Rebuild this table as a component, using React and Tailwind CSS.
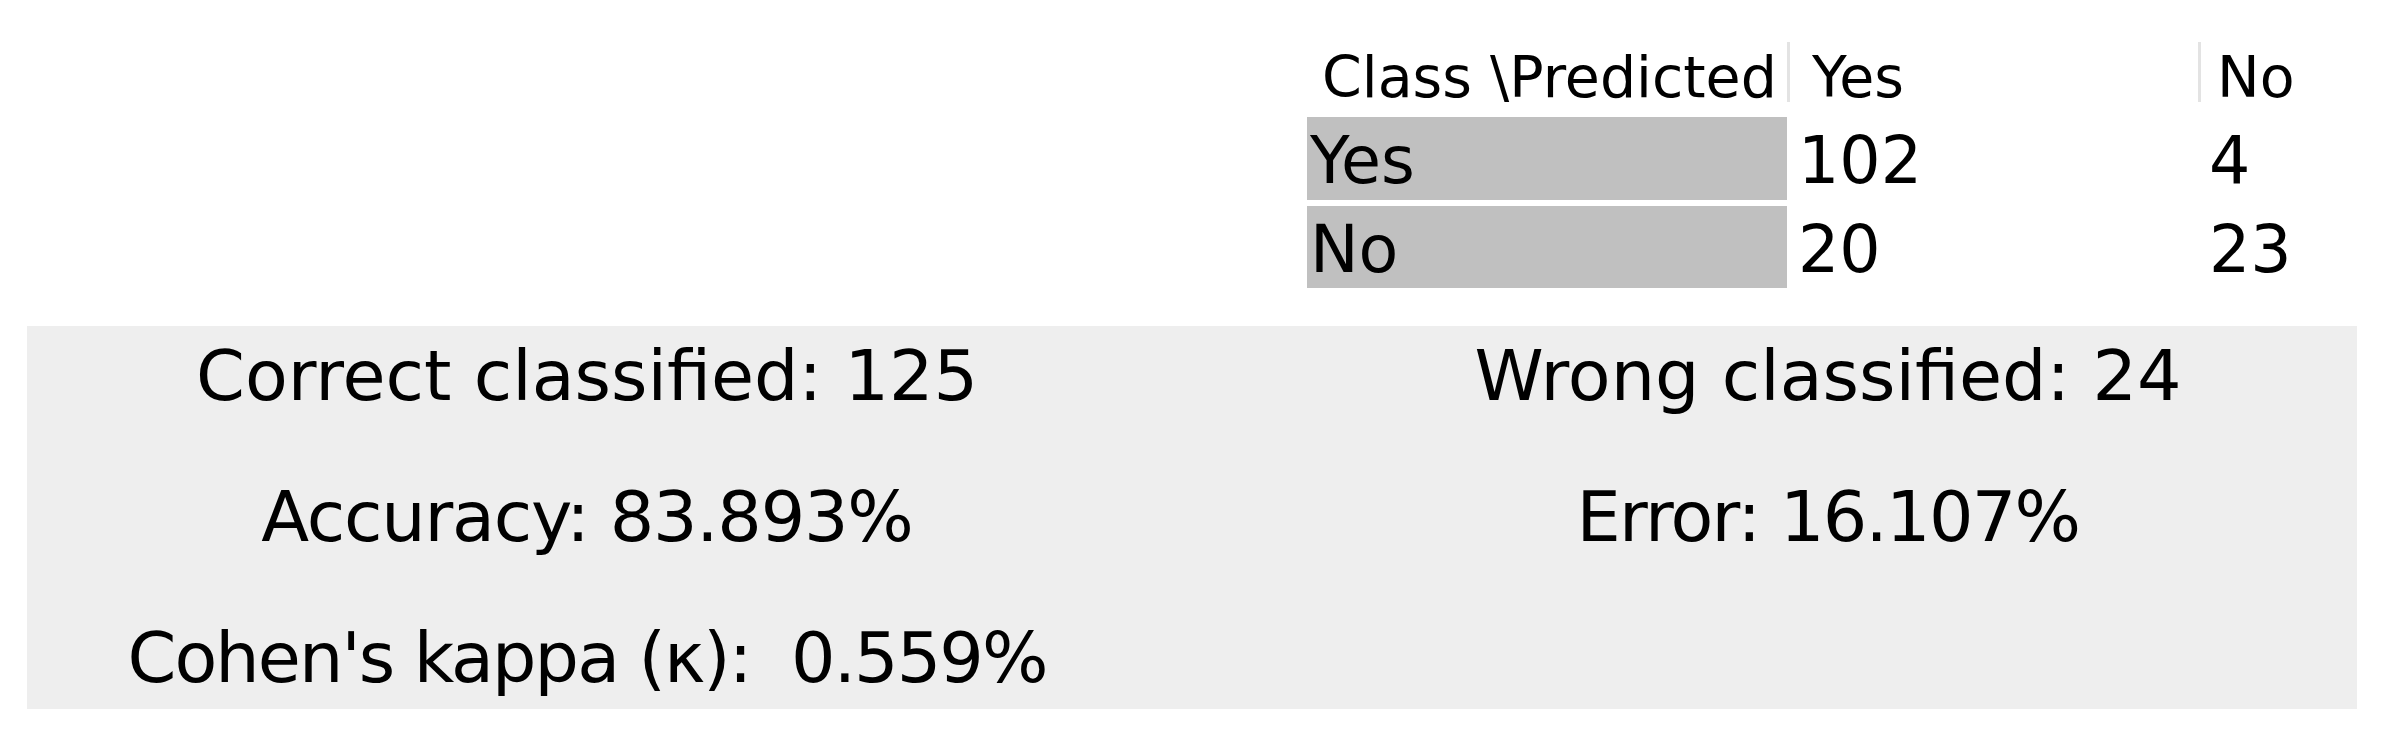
const font = { fontFamily: '"DejaVu Sans", "Liberation Sans", sans-serif' };

const rows = [
  { label: "Yes", yes: 102, no: 4, height: "h-[83px]" },
  { label: "No", yes: 20, no: 23, height: "h-[82px]" },
];

function ConfusionTable() {
  return (
    <div className="ml-[1307px] w-[1074px] text-black">
      <div className="flex h-[60px] text-[57px] leading-[70px]">
        <div className="w-[480px] whitespace-nowrap pl-[15px]">Class \Predicted</div>
        <div className="w-[3px] bg-[#e3e3e3]" />
        <div className="w-[408px] pl-[22px]">Yes</div>
        <div className="w-[3px] bg-[#e3e3e3]" />
        <div className="flex-1 pl-[16px]">No</div>
      </div>
      <div className="mt-[15px] flex flex-col gap-[6px] text-[65px] leading-[87px]">
        {rows.map((r) => (
          <div key={r.label} className={`flex ${r.height}`}>
            <div className="w-[480px] bg-[#c0c0c0] pl-[3px]">{r.label}</div>
            <div className="w-[411px] pl-[11px]">{r.yes}</div>
            <div className="flex-1 pl-[11px]">{r.no}</div>
          </div>
        ))}
      </div>
    </div>
  );
}

function Stats() {
  return (
    <div className="ml-[27px] mt-[38px] w-[2330px] bg-[#eeeeee] pt-[9px] pb-[10px] text-black">
      <div className="grid grid-cols-[1120px_1fr] gap-x-[152px] gap-y-[59px] text-center text-[70px] leading-[82px] whitespace-pre">
        <div>Correct classified: 125</div>
        <div>Wrong classified: 24</div>
        <div className="tracking-[-1.2px]">Accuracy: 83.893%</div>
        <div className="tracking-[-1.7px]">Error: 16.107%</div>
        <div className="tracking-[-1.9px]">Cohen's kappa (κ):  0.559%</div>
        <div />
      </div>
    </div>
  );
}

export default function App() {
  return (
    <div className="h-[735px] w-[2381px] overflow-hidden bg-white pt-[42px]" style={font}>
      <ConfusionTable />
      <Stats />
    </div>
  );
}
